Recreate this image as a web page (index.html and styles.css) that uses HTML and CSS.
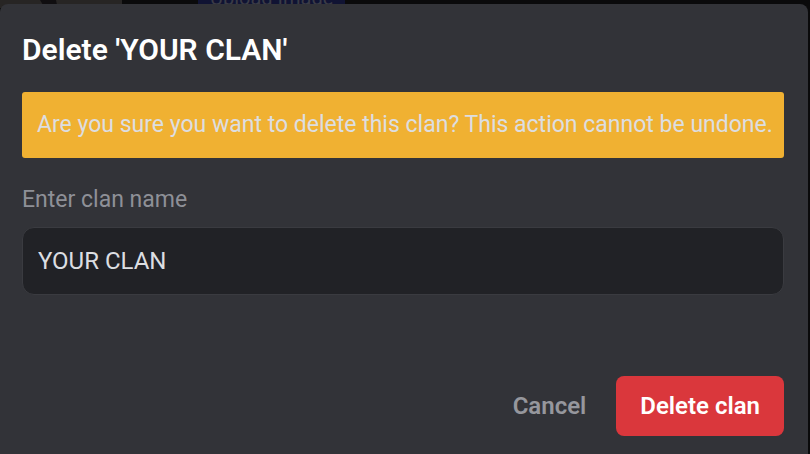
FILE: index.html
```html
<!DOCTYPE html>
<html lang="en">
<head>
<meta charset="utf-8">
<meta name="viewport" content="width=device-width, initial-scale=1">
<title>Delete clan</title>
<link rel="stylesheet" href="styles.css">
</head>
<body>
<div class="backdrop" aria-hidden="true">
  <svg class="avatar" width="124" height="124" viewBox="0 0 124 124">
    <path d="M0 90 H122 V94 Q121 97 118 100 H0 Z" fill="#272524"/>
    <path d="M40 90 L46 100 L58 100 L56 90 Z" fill="#100e10"/>
  </svg>
  <span class="upload">Upload Image</span>
</div>
<form class="dialog" role="dialog" aria-labelledby="dialog-title">
  <h1 class="title" id="dialog-title">Delete 'YOUR CLAN'</h1>
  <p class="warning">Are you sure you want to delete this clan? This action cannot be undone.</p>
  <label class="label" for="clan-name">Enter clan name</label>
  <input class="input" id="clan-name" type="text" value="YOUR CLAN">
  <div class="actions">
    <button class="button" type="button">Cancel</button>
    <button class="button danger" type="submit">Delete clan</button>
  </div>
</form>
</body>
</html>
```
FILE: styles.css
```css
* {
  box-sizing: border-box;
}

body {
  margin: 0;
  min-height: 100vh;
  display: flex;
  overflow: hidden;
  background: #0a0a0b;
  color: #dcdee1;
  font-family: Roboto, "Noto Sans", sans-serif;
  font-size: 23px;
  line-height: 32px;
}

.backdrop {
  position: absolute;
  top: 0;
  left: 0;
  width: 100%;
  height: 8px;
  overflow: hidden;
  display: flex;
  align-items: flex-end;
  gap: 74px;
}

.avatar {
  flex: none;
  margin-bottom: -26px;
}

.upload {
  padding: 12px;
  border-radius: 4px;
  background: #101333;
  color: #3a3b46;
  font-size: 20px;
  line-height: 24px;
  margin-bottom: -14px;
  white-space: nowrap;
}

.dialog {
  position: relative;
  flex: 1;
  display: flex;
  flex-direction: column;
  margin: 4px 2px 0 0;
  padding: 26px 24px 18px 22px;
  border-radius: 8px 8px 0 0;
  background: #323338;
}

.title {
  margin: 0 0 22px;
  color: #ffffff;
  font-size: 30px;
  font-weight: 600;
  line-height: 40px;
}

.warning {
  margin: 0 0 26px;
  padding: 17px 8px 17px 15px;
  border-radius: 3px;
  background: #f0b132;
}

.label {
  margin-bottom: 11px;
  color: #8e9097;
}

.input {
  width: 100%;
  height: 68px;
  padding: 0 15px;
  border: 1px solid #3a3b40;
  border-radius: 12px;
  outline: 0;
  background: #212226;
  color: inherit;
  font: inherit;
  font-size: 24px;
}

.actions {
  display: flex;
  justify-content: flex-end;
  gap: 6px;
  margin-top: auto;
}

.button {
  height: 60px;
  padding: 0 24px;
  border: 0;
  border-radius: 8px;
  background: transparent;
  color: #96979d;
  font: inherit;
  font-size: 24px;
  font-weight: 600;
  cursor: pointer;
}

.danger {
  background: #da373c;
  color: #ffffff;
}
```
